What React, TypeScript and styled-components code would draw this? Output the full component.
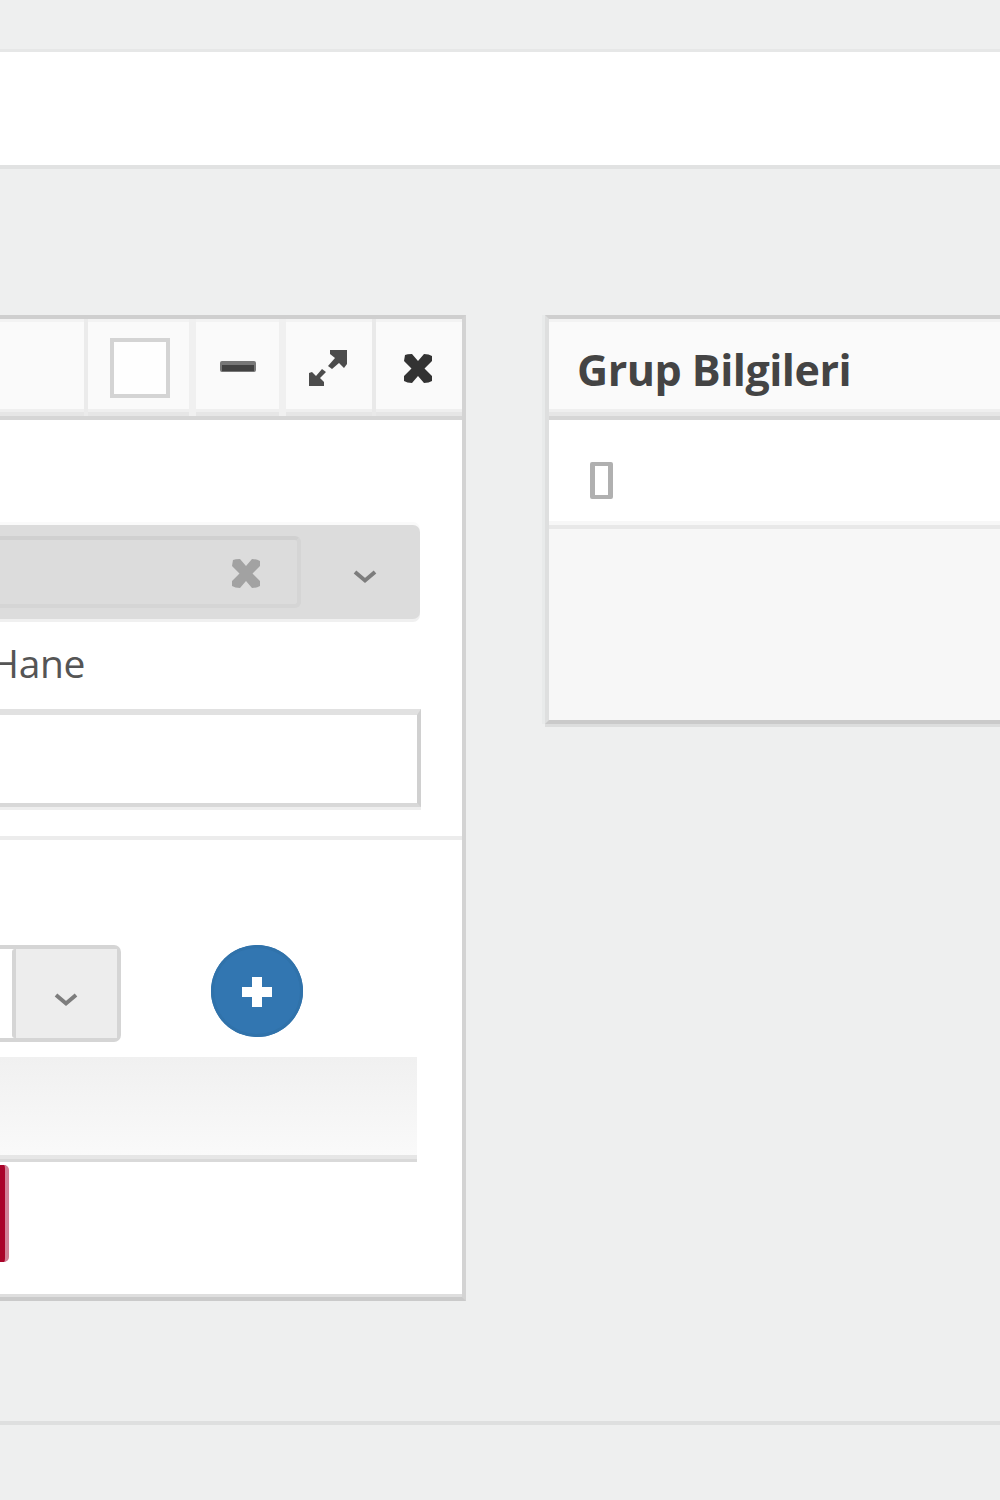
import React from "react";
import styled, { createGlobalStyle } from "styled-components";

const GlobalStyle = createGlobalStyle`
  *, *::before, *::after { box-sizing: border-box; }
  html, body { margin: 0; background: #eeefef; }
  body { overflow: hidden; }
`;

const Page = styled.div`
  display: flex;
  flex-direction: column;
  width: 1000px;
  height: 1500px;
  padding-top: 49px;
  overflow: hidden;
  background: #eeefef;
  color: #333;
  font-family: "Open Sans", "Noto Sans", sans-serif;
`;

const Ribbon = styled.header`
  flex: none;
  height: 120px;
  background: #fff;
  border-top: 3px solid #e6e7e7;
  border-bottom: 4px solid #e1e2e2;
`;

const Workspace = styled.main`
  flex: none;
  display: flex;
  align-items: flex-start;
  gap: 79px;
  height: 1256px;
  padding-top: 146px;
  border-bottom: 4px solid #dedfdf;
`;

const DetailPanel = styled.section`
  width: 466px;
  height: 986px;
  background: #fff;
  border-top: 4px solid #cfcfcf;
  border-right: 4px solid #d3d3d3;
  border-bottom: 4px solid #cacaca;
  box-shadow: inset 0 -3px #dedede;
`;

const GroupPanel = styled.section`
  width: 455px;
  height: 409px;
  background: #fff;
  border-top: 4px solid #cfcfcf;
  border-left: 4px solid #dedfdf;
  border-bottom: 4px solid #cacaca;
  box-shadow: -3px 0 #e8eaea, 0 3px #dcdddd;
`;

const PanelHeader = styled.div`
  display: flex;
  justify-content: flex-end;
  height: 101px;
  background: #fafafa;
  border-bottom: 4px solid #d6d6d6;
  box-shadow: inset 0 -4px #e6e6e6, inset 0 -7px #efefef, inset 0 3px #f3f3f3;
`;

const Tool = styled.div<{ $width: number; $line: number; $color: string }>`
  display: flex;
  align-items: center;
  justify-content: center;
  width: ${(p) => p.$width}px;
  border-left: ${(p) => p.$line}px solid ${(p) => p.$color};
`;

const CheckBox = styled.div`
  width: 60px;
  height: 60px;
  margin: 0 0 0 2px;
  background: #fefefe;
  border: 4px solid #d4d4d4;
`;

const Icon = styled.svg<{ $top?: number; $left?: number }>`
  display: block;
  flex: none;
  margin-top: ${(p) => p.$top ?? 0}px;
  margin-left: ${(p) => p.$left ?? 0}px;
`;

const Title = styled.h2`
  flex: 1;
  margin: 0;
  padding-left: 28px;
  font-size: 43px;
  line-height: 102px;
  font-weight: 700;
  letter-spacing: -0.5px;
  white-space: nowrap;
  color: #444;
`;

const EmptyRow = styled.div`
  height: 109px;
  padding: 42px 0 0 41px;
  border-bottom: 4px solid #e8e8e8;
  box-shadow: inset 0 -4px #f7f7f7;
`;

const MissingGlyph = styled.div`
  width: 23px;
  height: 37px;
  border: 4px solid #b0b0b0;
  border-width: 4px 5px;
  border-radius: 2px;
`;

const GroupFooter = styled.div`
  height: 191px;
  background: #f7f7f7;
`;

const FieldSet = styled.div`
  height: 420px;
  padding-top: 105px;
  border-bottom: 4px solid #ececec;
`;

const DisabledSelect = styled.div`
  display: flex;
  align-items: center;
  width: 420px;
  height: 94px;
  background: #dcdcdc;
  border-radius: 0 7px 7px 0;
  box-shadow: 0 3px #f0f0f0, 0 -3px #fafafa;
`;

const Selection = styled.div`
  display: flex;
  align-items: center;
  justify-content: flex-end;
  width: 301px;
  height: 72px;
  padding-right: 35px;
  border: 4px solid #d5d5d5;
  border-top-color: #d0d0d0;
  border-left: 0;
  border-radius: 0 6px 6px 0;
`;

const Label = styled.label`
  display: flex;
  justify-content: flex-end;
  width: 85px;
  height: 90px;
  font-size: 39px;
  line-height: 88px;
  letter-spacing: -0.4px;
  color: #555;
`;

const TextInput = styled.div`
  width: 421px;
  height: 98px;
  background: #fff;
  border-top: 6px solid #e1e1e1;
  border-right: 4px solid #d0d0d0;
  border-bottom: 4px solid #d8d8d8;
  box-shadow: 0 3px #eeeeee;
`;

const AddRow = styled.div`
  display: flex;
  gap: 90px;
  padding-top: 105px;
`;

const Combo = styled.div`
  display: flex;
  justify-content: flex-end;
  width: 121px;
  height: 97px;
  background: #fff;
  border: 4px solid #d5d5d5;
  border-left: 0;
  border-radius: 0 7px 7px 0;
`;

const ComboToggle = styled.div`
  display: flex;
  align-items: center;
  justify-content: center;
  width: 105px;
  background: #ededed;
  border-left: 4px solid #d5d5d5;
  border-radius: 3px 0 0 3px;
`;

const AddButton = styled.div`
  display: flex;
  align-items: center;
  justify-content: center;
  width: 92px;
  height: 92px;
  border-radius: 50%;
  background: #3276b1;
  box-shadow: inset 0 0 0 3px #3072aa;
`;

const TableHead = styled.div`
  width: 417px;
  height: 105px;
  margin-top: 15px;
  background: linear-gradient(#f0f0f0, #fafafa);
  border-bottom: 3px solid #d9d9d9;
  box-shadow: inset 0 -4px #e6e6e6;
`;

const DeleteButton = styled.div`
  width: 9px;
  height: 97px;
  margin-top: 3px;
  background: #a90329;
  border-right: 4px solid #d18297;
  border-radius: 0 5px 5px 0;
`;

function Cross({ color, left, top }: { color: string; left?: number; top?: number }) {
  return (
    <Icon width="32" height="31" viewBox="0 0 32 31" $left={left} $top={top}>
      <path d="M3 2Q5 1 10 1L16 8L22 1Q27 1 30 3V8L22.5 15.5L30 23V28Q27 30 22 30L16 23L10 30Q5 30 2 28V23L9.5 15.5L2 8Z" fill={color} />
    </Icon>
  );
}

function Chevron({ top, left }: { top?: number; left?: number }) {
  return (
    <Icon width="24" height="16" viewBox="0 0 24 16" $top={top} $left={left}>
      <path d="M2 3L12 11.5L22 3" fill="none" stroke="#7d7d7d" strokeWidth="4" />
    </Icon>
  );
}

export default function App() {
  return (
    <>
      <GlobalStyle />
      <Page>
        <Ribbon />
        <Workspace>
          <DetailPanel>
            <PanelHeader>
              <Tool $width={105} $line={4} $color="#ebebeb"><CheckBox /></Tool>
              <Tool $width={90} $line={7} $color="#f0f0f0">
                <Icon width="36" height="11" viewBox="0 0 36 11" $left={0} $top={-2}>
                  <rect width="36" height="11" rx="2" fill="#777" />
                  <rect x="2" y="4" width="32" height="6" fill="#424242" />
                </Icon>
              </Tool>
              <Tool $width={93} $line={7} $color="#f0f0f0">
                <Icon width="40" height="38" viewBox="0 0 40 38" $left={-2} $top={0}>
                  <path d="M22 1H39V15L36 19L31 14L24 20L20 17L27 9L22 5Z" fill="#4c4c4c" />
                  <path d="M1 37V24L4 23L8 27L14 20L18 23L12 29L16 33V37Z" fill="#4c4c4c" />
                </Icon>
              </Tool>
              <Tool $width={90} $line={4} $color="#e9e9e9"><Cross color="#333" left={-3} top={2} /></Tool>
            </PanelHeader>
            <FieldSet>
              <DisabledSelect>
                <Selection><Cross color="#a2a2a2" top={2} /></Selection>
                <Chevron left={52} top={10} />
              </DisabledSelect>
              <Label>Hane</Label>
              <TextInput />
            </FieldSet>
            <AddRow>
              <Combo><ComboToggle><Chevron top={12} left={-2} /></ComboToggle></Combo>
              <AddButton>
                <Icon width="32" height="32" viewBox="0 0 32 32" $top={2}>
                  <path d="M11 1H21V11H31V21H21V31H11V21H1V11H11Z" fill="#fff" />
                </Icon>
              </AddButton>
            </AddRow>
            <TableHead />
            <DeleteButton />
          </DetailPanel>
          <GroupPanel>
            <PanelHeader><Title>Grup Bilgileri</Title></PanelHeader>
            <EmptyRow><MissingGlyph /></EmptyRow>
            <GroupFooter />
          </GroupPanel>
        </Workspace>
      </Page>
    </>
  );
}
